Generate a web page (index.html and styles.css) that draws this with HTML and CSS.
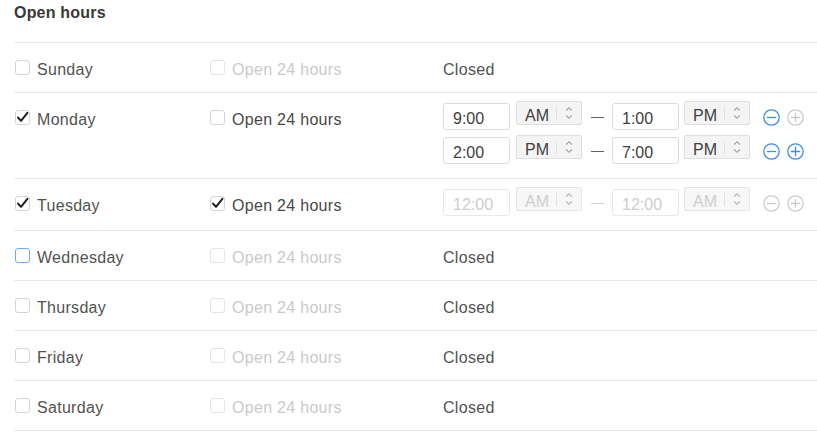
FILE: index.html
```html
<!DOCTYPE html>
<html lang="en">
<head>
<meta charset="utf-8">
<title>Open hours</title>
<link rel="stylesheet" href="styles.css">
</head>
<body>
<div class="panel">
  <h2 class="title">Open hours</h2>
  <div class="rows">

    <div class="row">
      <label class="cell day"><span class="cb"></span><span class="txt">Sunday</span></label>
      <label class="cell all disabled"><span class="cb"></span><span class="txt">Open 24 hours</span></label>
      <div class="cell"><span class="txt">Closed</span></div>
    </div>

    <div class="row">
      <label class="cell day"><span class="cb checked"><svg viewBox="0 0 15 15"><polyline points="3,7.6 6,10.8 12.4,2.8"/></svg></span><span class="txt">Monday</span></label>
      <label class="cell all"><span class="cb"></span><span class="txt">Open 24 hours</span></label>
      <div class="cell times">
        <div class="trow">
          <span class="tin">9:00</span>
          <span class="sel"><span class="sv">AM</span><span class="sd"></span><span class="chev"><svg viewBox="0 0 8 16"><path d="M1.2 5.5 L4 2.7 L6.8 5.5 M1.2 10.5 L4 13.3 L6.8 10.5"/></svg></span></span>
          <span class="dash"></span>
          <span class="tin">1:00</span>
          <span class="sel sel2"><span class="sv">PM</span><span class="sd"></span><span class="chev"><svg viewBox="0 0 8 16"><path d="M1.2 5.5 L4 2.7 L6.8 5.5 M1.2 10.5 L4 13.3 L6.8 10.5"/></svg></span></span>
          <span class="ic minus on"><svg viewBox="0 0 17 17"><circle cx="8.5" cy="8.5" r="7.7"/><path d="M3.8 8.5 H13.2"/></svg></span>
          <span class="ic plus"><svg viewBox="0 0 17 17"><circle cx="8.5" cy="8.5" r="7.7"/><path d="M3.8 8.5 H13.2 M8.5 3.8 V13.2"/></svg></span>
        </div>
        <div class="trow">
          <span class="tin">2:00</span>
          <span class="sel"><span class="sv">PM</span><span class="sd"></span><span class="chev"><svg viewBox="0 0 8 16"><path d="M1.2 5.5 L4 2.7 L6.8 5.5 M1.2 10.5 L4 13.3 L6.8 10.5"/></svg></span></span>
          <span class="dash"></span>
          <span class="tin">7:00</span>
          <span class="sel sel2"><span class="sv">PM</span><span class="sd"></span><span class="chev"><svg viewBox="0 0 8 16"><path d="M1.2 5.5 L4 2.7 L6.8 5.5 M1.2 10.5 L4 13.3 L6.8 10.5"/></svg></span></span>
          <span class="ic minus on"><svg viewBox="0 0 17 17"><circle cx="8.5" cy="8.5" r="7.7"/><path d="M3.8 8.5 H13.2"/></svg></span>
          <span class="ic plus on"><svg viewBox="0 0 17 17"><circle cx="8.5" cy="8.5" r="7.7"/><path d="M3.8 8.5 H13.2 M8.5 3.8 V13.2"/></svg></span>
        </div>
      </div>
    </div>

    <div class="row">
      <label class="cell day"><span class="cb checked"><svg viewBox="0 0 15 15"><polyline points="3,7.6 6,10.8 12.4,2.8"/></svg></span><span class="txt">Tuesday</span></label>
      <label class="cell all"><span class="cb checked"><svg viewBox="0 0 15 15"><polyline points="3,7.6 6,10.8 12.4,2.8"/></svg></span><span class="txt">Open 24 hours</span></label>
      <div class="cell times off">
        <div class="trow">
          <span class="tin">12:00</span>
          <span class="sel"><span class="sv">AM</span><span class="sd"></span><span class="chev"><svg viewBox="0 0 8 16"><path d="M1.2 5.5 L4 2.7 L6.8 5.5 M1.2 10.5 L4 13.3 L6.8 10.5"/></svg></span></span>
          <span class="dash"></span>
          <span class="tin">12:00</span>
          <span class="sel sel2"><span class="sv">AM</span><span class="sd"></span><span class="chev"><svg viewBox="0 0 8 16"><path d="M1.2 5.5 L4 2.7 L6.8 5.5 M1.2 10.5 L4 13.3 L6.8 10.5"/></svg></span></span>
          <span class="ic minus"><svg viewBox="0 0 17 17"><circle cx="8.5" cy="8.5" r="7.7"/><path d="M3.8 8.5 H13.2"/></svg></span>
          <span class="ic plus"><svg viewBox="0 0 17 17"><circle cx="8.5" cy="8.5" r="7.7"/><path d="M3.8 8.5 H13.2 M8.5 3.8 V13.2"/></svg></span>
        </div>
      </div>
    </div>

    <div class="row">
      <label class="cell day"><span class="cb focus"></span><span class="txt">Wednesday</span></label>
      <label class="cell all disabled"><span class="cb"></span><span class="txt">Open 24 hours</span></label>
      <div class="cell"><span class="txt">Closed</span></div>
    </div>

    <div class="row">
      <label class="cell day"><span class="cb"></span><span class="txt">Thursday</span></label>
      <label class="cell all disabled"><span class="cb"></span><span class="txt">Open 24 hours</span></label>
      <div class="cell"><span class="txt">Closed</span></div>
    </div>

    <div class="row">
      <label class="cell day"><span class="cb"></span><span class="txt">Friday</span></label>
      <label class="cell all disabled"><span class="cb"></span><span class="txt">Open 24 hours</span></label>
      <div class="cell"><span class="txt">Closed</span></div>
    </div>

    <div class="row">
      <label class="cell day"><span class="cb"></span><span class="txt">Saturday</span></label>
      <label class="cell all disabled"><span class="cb"></span><span class="txt">Open 24 hours</span></label>
      <div class="cell"><span class="txt">Closed</span></div>
    </div>

  </div>
</div>
</body>
</html>
```

FILE: styles.css
```css
* { box-sizing: border-box; }

body {
  margin: 0;
  background: #fff;
  font-family: "Liberation Sans", Arial, sans-serif;
  font-size: 16px;
  color: #525252;
  letter-spacing: 0.3px;
}

.panel {
  padding-left: 14px;
}

.title {
  margin: 3px 0 19px;
  font-size: 16px;
  line-height: 20px;
  font-weight: 700;
  color: #383838;
  letter-spacing: 0.2px;
}

.rows {
  border-top: 1px solid #e8e8e8;
}

.row {
  display: grid;
  grid-template-columns: 196px 233px 1fr;
  padding: 10px 0 14px;
  border-bottom: 1px solid #e8e8e8;
}

.cell {
  display: flex;
  align-items: flex-start;
  min-height: 25px;
}

.txt {
  padding-top: 8px;
  line-height: 17px;
  white-space: nowrap;
}

.cb {
  flex: none;
  width: 15px;
  height: 15px;
  margin-top: 7px;
  margin-right: 7px;
  border: 1px solid #d4d4d4;
  border-radius: 3px;
  background: #fff;
  position: relative;
}

.day .cb { margin-left: 1px; }

.cb svg {
  position: absolute;
  left: -1px;
  top: -1px;
  width: 15px;
  height: 15px;
  fill: none;
  stroke: #1e1e1e;
  stroke-width: 2;
  stroke-linecap: round;
  stroke-linejoin: round;
}

.cb.focus { border-color: #6ea9f2; }

.disabled .cb { border-color: #e4e4e4; }
.disabled .txt { color: #cacaca; }

.all .txt { color: #484848; }
.all.disabled .txt { color: #cacaca; }

.times {
  flex-direction: column;
  gap: 7px;
}

.trow {
  display: flex;
  align-items: flex-start;
}

.tin {
  width: 67px;
  height: 27px;
  border: 1px solid #dcdcdc;
  border-radius: 3px;
  padding: 6px 0 0 9px;
  line-height: 17px;
  color: #404040;
  letter-spacing: 0;
  background: #fff;
}

.sel {
  display: flex;
  width: 66px;
  height: 24px;
  margin: -2px 0 0 6px;
  border: 1px solid #dedede;
  border-radius: 2px;
  background: #f4f4f4;
}

.sel2 { margin-left: 5px; }

.sv {
  width: 39px;
  padding: 5px 0 0 8px;
  line-height: 17px;
  color: #404040;
  letter-spacing: 0;
}

.sd {
  width: 1px;
  height: 13px;
  margin-top: 5px;
  background: #e0e0e0;
}

.chev {
  flex: 1;
  display: flex;
  justify-content: center;
  padding-top: 3px;
}

.chev svg {
  width: 8px;
  height: 16px;
  fill: none;
  stroke: #a0a0a0;
  stroke-width: 1.1;
}

.dash {
  width: 13px;
  height: 1px;
  margin: 14px 8px 0 9px;
  background: #606060;
}

.ic {
  width: 17px;
  height: 17px;
  margin-top: 6px;
}

.minus { margin-left: 13px; }
.plus { margin-left: 7px; }

.ic svg {
  display: block;
  width: 17px;
  height: 17px;
  fill: none;
  stroke: #cacaca;
  stroke-width: 1.3;
}

.ic.on svg { stroke: #3e8ee8; }

.off .tin { border-color: #e8e8e8; color: #cdcdcd; }
.off .sel { border-color: #e6e6e6; background: #f7f7f7; }
.off .sv { color: #cdcdcd; }
.off .chev svg { stroke: #b5b5b5; }
.off .dash { background: #d0d0d0; }
.off .ic svg { stroke: #cdcdcd; }
```
